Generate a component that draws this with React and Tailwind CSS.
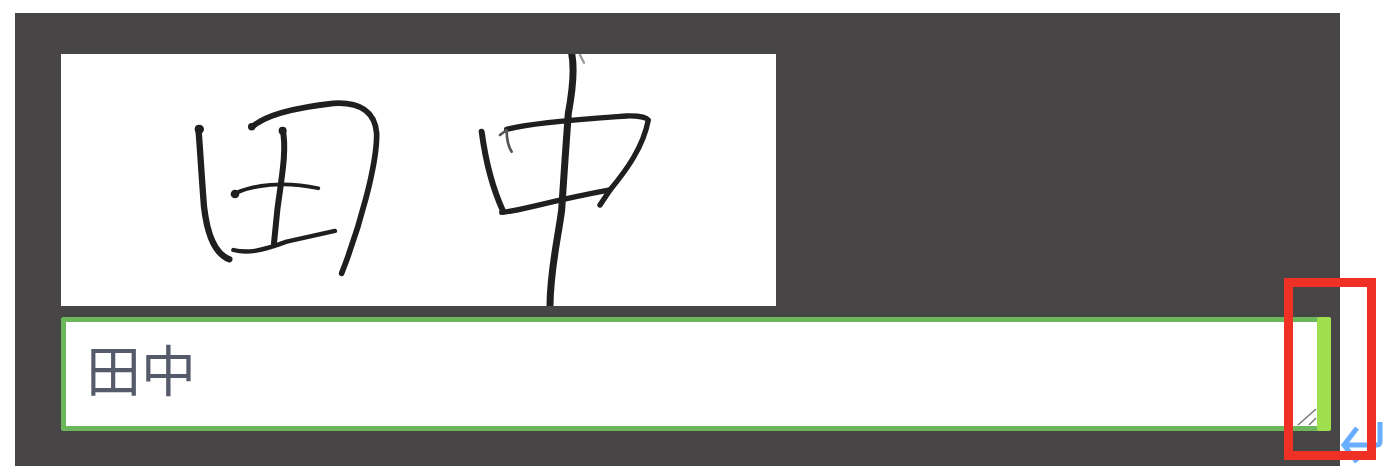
import React from "react";

const ink = "#1f1f1f";

function Handwriting() {
  return (
    <svg viewBox="61 54 715 252" className="block h-full w-full blur-[0.6px]" fill="none" stroke={ink} strokeLinecap="round" strokeLinejoin="round">
      {/* 田 */}
      <g transform="translate(170 50) scale(0.3333)" strokeWidth="16">
        <path d="M85 235C90 290 92 340 102 470C110 540 130 610 178 628" strokeWidth="19" />
        <path d="M245 232C290 190 400 170 490 160C570 155 615 185 620 250C622 340 570 530 515 670" strokeWidth="17" />
        <path d="M338 240C352 300 332 400 322 480L312 580" strokeWidth="18" />
        <path d="M195 430C250 405 340 392 445 415" strokeWidth="11" />
        <path d="M190 600C230 610 270 605 350 575L495 543" strokeWidth="13" />
        <circle cx="88" cy="238" r="14" fill={ink} stroke="none" />
        <circle cx="245" cy="230" r="11" fill={ink} stroke="none" />
        <circle cx="338" cy="242" r="12" fill={ink} stroke="none" />
        <circle cx="195" cy="432" r="13" fill={ink} stroke="none" />
      </g>
      {/* 中 */}
      <g transform="translate(460 50) scale(0.3333)" strokeWidth="16">
        <path d="M335 10C345 60 338 120 325 190L315 330L305 480C295 560 270 660 270 770" strokeWidth="21" />
        <path d="M360 15L372 38" strokeWidth="7" stroke="#999" />
        <path d="M65 245C75 320 95 410 130 485" strokeWidth="18" />
        <path d="M140 238C230 215 400 205 500 198C535 197 560 203 565 210C550 290 500 360 450 420L420 465" strokeWidth="16" />
        <path d="M120 255L140 240C140 270 145 290 155 305" strokeWidth="8" stroke="#555" />
        <path d="M125 487C170 485 260 455 450 420" strokeWidth="16" />
      </g>
    </svg>
  );
}

export default function App() {
  return (
    <div className="relative h-[476px] w-[1394px] overflow-hidden bg-white pl-[15px] pt-[13px]">
      <div className="h-[453px] w-[1325px] bg-[#474546] pl-[46px] pt-[41px]">
        <div className="h-[252px] w-[715px] bg-white">
          <Handwriting />
        </div>
        <div className="relative mt-[11px] flex h-[114px] w-[1270px] items-center rounded-[2px] border-[5px] border-[#6cb65c] bg-white pb-[13px] pl-[20px]">
          <span className="text-[55px] leading-none text-[#565b6b] font-['Noto_Sans_CJK_JP',sans-serif]">田中</span>
          <div className="absolute -bottom-[5px] -right-[5px] -top-[5px] w-[14px] rounded-[2px] bg-[#9fdf4e]" />
          <svg viewBox="0 0 20 18" className="absolute bottom-0 right-[9px] h-[18px] w-[20px]" stroke="#777" strokeWidth="1.5">
            <path d="M1 17L19 1M12 17L19 10" />
          </svg>
        </div>
      </div>
      {/* return arrow, sits behind the red marker */}
      <svg viewBox="0 0 44 46" className="absolute left-[1340px] top-[422px] h-[46px] w-[44px]" fill="none" stroke="#69adff" strokeWidth="5">
        <path d="M40 0V20Q40 23 36 23H4M17 6L4 23L17 40" />
      </svg>
      <div className="absolute left-[1284px] top-[278px] h-[182px] w-[92px] border-[9px] border-[#ee3124]" />
    </div>
  );
}
